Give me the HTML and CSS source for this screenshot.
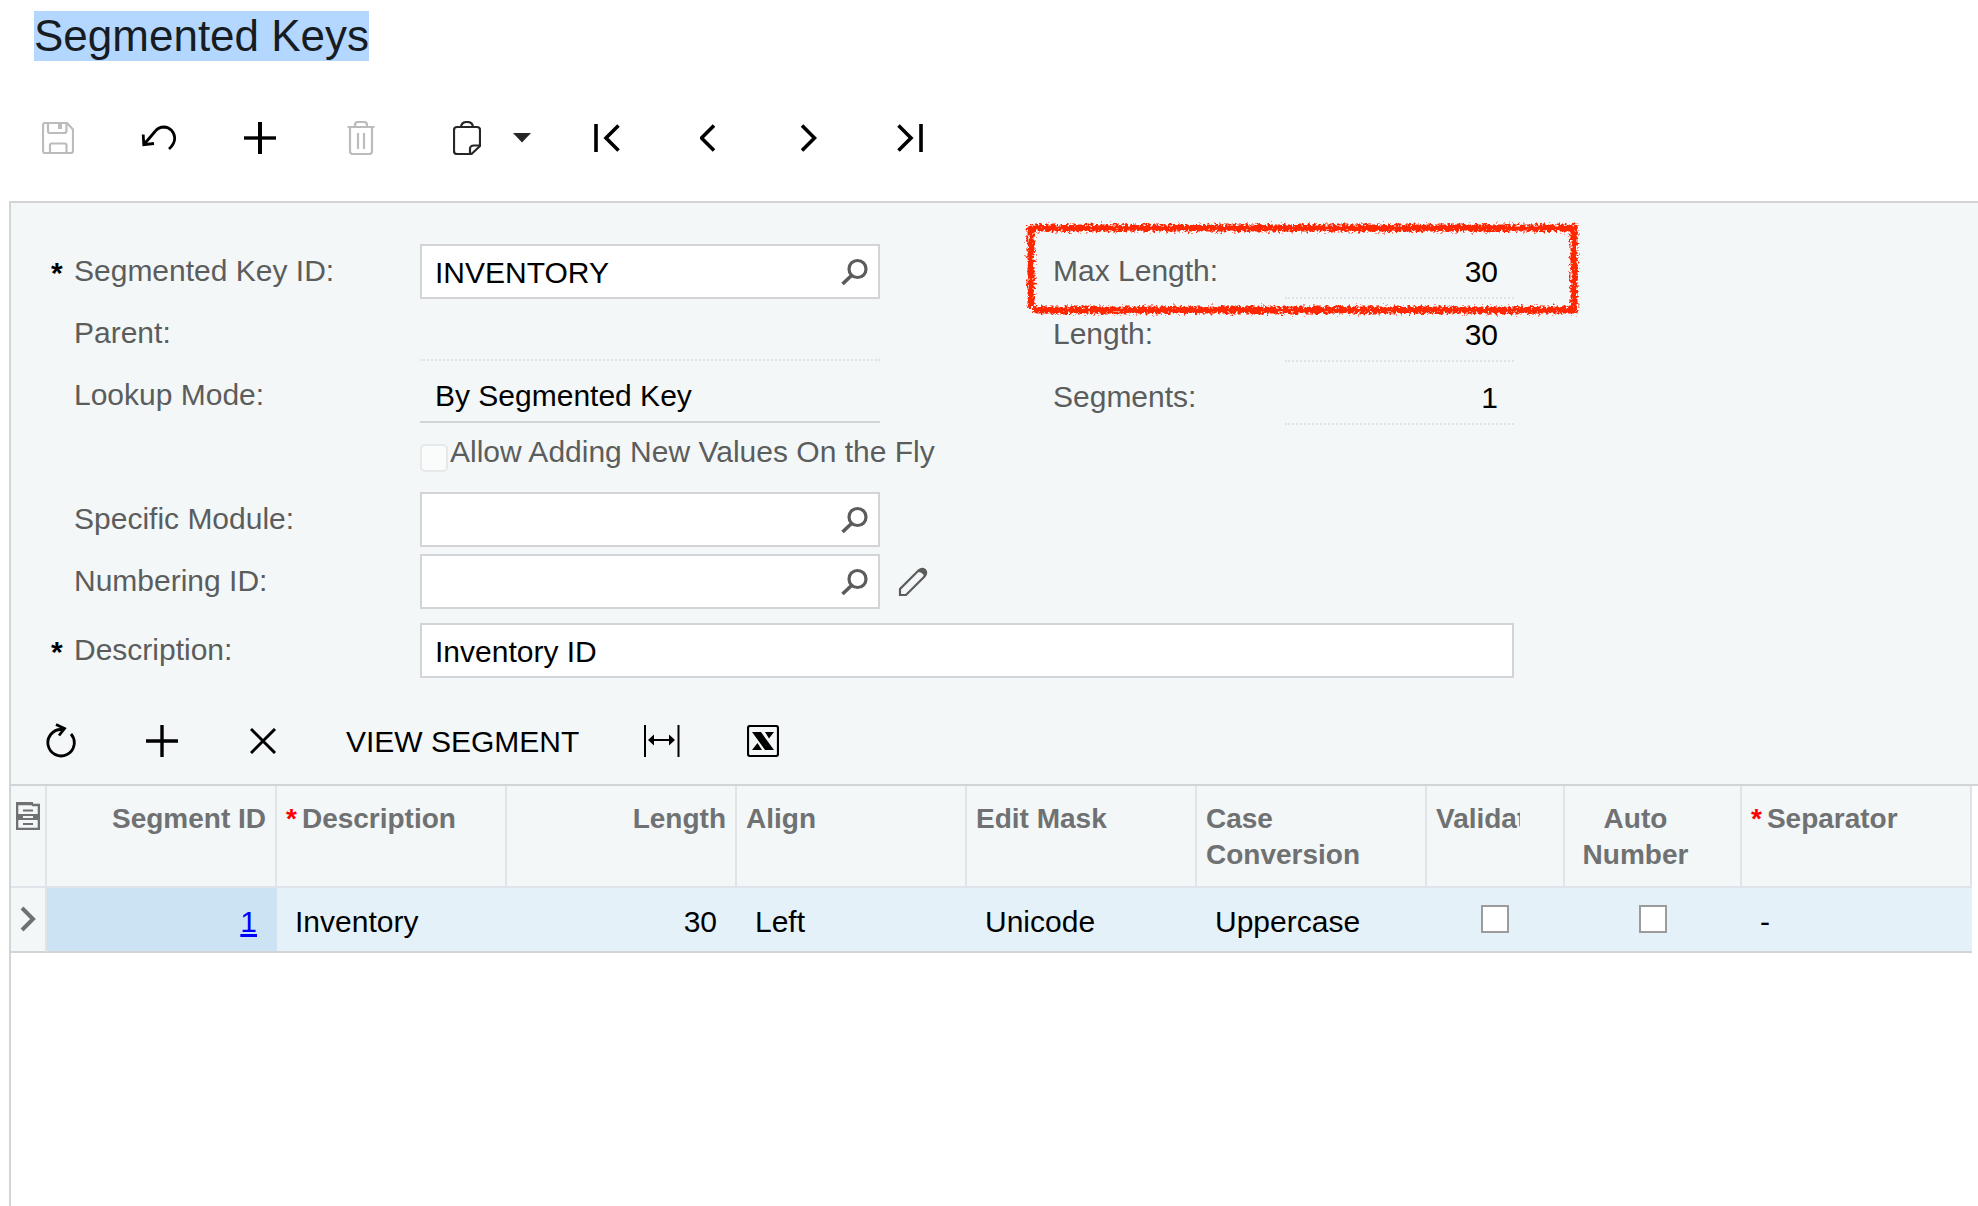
FILE: index.html
```html
<!DOCTYPE html>
<html lang="en">
<head>
  <meta charset="UTF-8">
  <meta name="viewport" content="width=device-width, initial-scale=1.0">
  <title>Segmented Keys</title>
  <link rel="stylesheet" href="styles.css">
</head>
<body>
  <!-- Shared icons -->
  <svg class="sprite" aria-hidden="true">
    <symbol id="icon-search" viewBox="0 0 28 28">
      <circle cx="17.5" cy="11" r="8.5" fill="none" stroke="currentColor" stroke-width="3.2"/>
      <path d="M11.5 17.5 L2.5 26" fill="none" stroke="currentColor" stroke-width="3.6"/>
    </symbol>
  </svg>

  <header class="page-header">
    <h1><span class="selected">Segmented Keys</span></h1>
  </header>

  <!-- Record toolbar -->
  <div class="toolbar record-toolbar">
    <button type="button" class="tool" aria-label="Save" disabled>
      <svg width="32" height="32" viewBox="0 0 32 32" fill="none" stroke="currentColor" stroke-width="2.2">
        <path d="M3 1 H25 L31 7.5 V29 Q31 31 29 31 H3 Q1 31 1 29 V3 Q1 1 3 1 Z"/>
        <path d="M6 1 V9 Q6 11 8 11 H22 Q24.5 11 24.5 9 V1"/>
        <path d="M8 31 V23 Q8 21.5 9.5 21.5 H23 Q24.5 21.5 24.5 23 V31"/>
        <path d="M18 2 V7" stroke-width="4"/>
      </svg>
    </button>
    <button type="button" class="tool" aria-label="Undo">
      <svg width="36" height="32" viewBox="0 0 36 32" fill="none" stroke="currentColor" stroke-width="2.8">
        <path d="M2.5 23 L14 9.5 Q17.5 5 23 5 A11 11.5 0 0 1 33.7 16 Q33.7 22 28 27"/>
        <path d="M2.2 12.5 L2.8 22.7 L13 21.5"/>
      </svg>
    </button>
    <button type="button" class="tool" aria-label="Add new record">
      <svg width="32" height="32" viewBox="0 0 32 32" stroke="currentColor" stroke-width="4">
        <path d="M16 0 V32" /><path d="M0 16 H32" stroke-width="3.4"/>
      </svg>
    </button>
    <button type="button" class="tool" aria-label="Delete" disabled>
      <svg width="28" height="34" viewBox="0 0 28 34" fill="none" stroke="currentColor" stroke-width="2.2">
        <path d="M0.5 6 H27.5 M8 6 V4 Q8 1 11 1 H17 Q20 1 20 4 V6"/>
        <path d="M3 6 V30 Q3 33 6 33 H22 Q25 33 25 30 V6"/>
        <path d="M11 12 V28 M17 12 V28"/>
      </svg>
    </button>
    <div class="clipboard-tools">
      <button type="button" class="tool-clip" aria-label="Clipboard">
        <svg width="28" height="34" viewBox="0 0 28 34" fill="none" stroke="currentColor" stroke-width="2.2">
          <path d="M4 6 H24 Q27 6 27 9 V25 L18.5 33 H4 Q1 33 1 30 V9 Q1 6 4 6 Z"/>
          <path d="M8 6 Q8.5 1 14 1 Q19.5 1 20 6"/>
          <path d="M27 24.5 H21 Q17 24.5 17 28 V33"/>
        </svg>
      </button>
      <button type="button" class="tool-caret" aria-label="Clipboard menu">
        <svg width="18" height="10" viewBox="0 0 18 10"><path d="M0 0 H18 L9 9.5 Z" fill="currentColor"/></svg>
      </button>
    </div>
    <button type="button" class="tool" aria-label="First">
      <svg width="26" height="28" viewBox="0 0 26 28" fill="none" stroke="currentColor" stroke-width="3.6">
        <path d="M2 0 V28 M24.5 1.5 L12 14 L24.5 26.5"/>
      </svg>
    </button>
    <button type="button" class="tool" aria-label="Previous">
      <svg width="16" height="28" viewBox="0 0 16 28" fill="none" stroke="currentColor" stroke-width="3.6">
        <path d="M14 1.5 L1.5 14 L14 26.5"/>
      </svg>
    </button>
    <button type="button" class="tool" aria-label="Next">
      <svg width="16" height="28" viewBox="0 0 16 28" fill="none" stroke="currentColor" stroke-width="3.6">
        <path d="M1 1.5 L13.5 14 L1 26.5"/>
      </svg>
    </button>
    <button type="button" class="tool" aria-label="Last">
      <svg width="26" height="28" viewBox="0 0 26 28" fill="none" stroke="currentColor" stroke-width="3.6">
        <path d="M24 0 V28 M1.5 1.5 L14 14 L1.5 26.5"/>
      </svg>
    </button>
  </div>

  <main>
    <!-- Key settings -->
    <form class="key-form">
      <div class="form-column">
        <div class="field">
          <label for="keyId"><b class="required">*</b>Segmented Key ID:</label>
          <div class="lookup">
            <input type="text" id="keyId" value="INVENTORY">
            <button type="button" aria-label="Find key"><svg width="28" height="28"><use href="#icon-search"/></svg></button>
          </div>
        </div>
        <div class="field">
          <label for="parent">Parent:</label>
          <input type="text" id="parent" class="readonly" readonly>
        </div>
        <div class="field">
          <label for="lookupMode">Lookup Mode:</label>
          <select id="lookupMode" class="readonly lookup-mode">
            <option>By Segmented Key</option>
          </select>
        </div>
        <div class="field check-field">
          <input type="checkbox" id="allowNew" disabled>
          <label for="allowNew">Allow Adding New Values On the Fly</label>
        </div>
        <div class="field">
          <label for="module">Specific Module:</label>
          <div class="lookup">
            <input type="text" id="module">
            <button type="button" aria-label="Find module"><svg width="28" height="28"><use href="#icon-search"/></svg></button>
          </div>
        </div>
        <div class="field">
          <label for="numbering">Numbering ID:</label>
          <div class="lookup">
            <input type="text" id="numbering">
            <button type="button" aria-label="Find numbering"><svg width="28" height="28"><use href="#icon-search"/></svg></button>
          </div>
          <button type="button" class="edit" aria-label="Edit numbering">
            <svg width="30" height="30" viewBox="0 0 30 30">
              <path d="M2 28 V22 L20.5 3.5 Q24 0.5 27 3 Q29.5 6 26.5 9.5 L8 28 Z" fill="none" stroke="currentColor" stroke-width="2.2"/>
              <path d="M19 5 Q24 0 27.5 2.5 Q30 6 26 10 Q25.5 5 19 5 Z" fill="currentColor"/>
            </svg>
          </button>
        </div>
      </div>

      <div class="form-column totals">
        <div class="field">
          <label for="maxLength">Max Length:</label>
          <input type="text" id="maxLength" class="readonly number" value="30" readonly>
          <!-- Hand-drawn marker around the limit -->
          <svg class="marker" width="564" height="102" viewBox="0 0 564 102" aria-hidden="true">
            <filter id="crayon" x="0" y="0" width="564" height="102" filterUnits="userSpaceOnUse">
              <feTurbulence type="fractalNoise" baseFrequency="0.4" numOctaves="2" seed="4"/>
              <feDisplacementMap in="SourceGraphic" scale="9" xChannelSelector="R" yChannelSelector="G"/>
            </filter>
            <path d="M10 10 H553 V92 H12 M10 7 V90" fill="none" stroke="#ff2600" stroke-width="7" filter="url(#crayon)"/>
          </svg>
        </div>
        <div class="field">
          <label for="length">Length:</label>
          <input type="text" id="length" class="readonly number" value="30" readonly>
        </div>
        <div class="field">
          <label for="segments">Segments:</label>
          <input type="text" id="segments" class="readonly number" value="1" readonly>
        </div>
      </div>

      <div class="field description">
        <label for="description"><b class="required">*</b>Description:</label>
        <input type="text" id="description" value="Inventory ID">
      </div>
    </form>

    <!-- Segments grid -->
    <div class="toolbar grid-toolbar">
      <button type="button" class="tool" aria-label="Refresh">
        <svg width="32" height="36" viewBox="0 0 32 36" fill="none" stroke="currentColor" stroke-width="2.8">
          <path d="M25 11 A13.2 13.2 0 1 1 15.5 6.5 L18 5.5"/>
          <path d="M10 1.5 L18.5 5.5 L13 12.5"/>
        </svg>
      </button>
      <button type="button" class="tool" aria-label="Add row">
        <svg width="34" height="32" viewBox="0 0 34 32" stroke="currentColor" stroke-width="3.4">
          <path d="M16 0 V32 M0 16 H32"/>
        </svg>
      </button>
      <button type="button" class="tool" aria-label="Delete row">
        <svg width="28" height="26" viewBox="0 0 28 26" stroke="currentColor" stroke-width="3">
          <path d="M1 1 L25 25 M25 1 L1 25"/>
        </svg>
      </button>
      <button type="button" class="tool-text">VIEW SEGMENT</button>
      <button type="button" class="tool" aria-label="Fit to screen">
        <svg width="36" height="32" viewBox="0 0 36 32" stroke="currentColor" stroke-width="2">
          <path d="M1 0 V32 M34.5 0 V32 M6 15 H30"/>
          <path d="M4 15 L10 9.5 V20.5 Z M31 15 L25 9.5 V20.5 Z" fill="currentColor" stroke="none"/>
        </svg>
      </button>
      <button type="button" class="tool" aria-label="Export to Excel">
        <svg width="32" height="32" viewBox="0 0 32 32">
          <rect x="1" y="1" width="30" height="30" rx="2" fill="none" stroke="currentColor" stroke-width="2.2"/>
          <path d="M5 7 H14 L27 25 H18 Z M18 7 H27 L22 13.5 Z M5 25 L10.5 18 L15 25 Z" fill="currentColor"/>
        </svg>
      </button>
    </div>

    <div class="grid">
      <table>
        <colgroup>
          <col class="col-marker">
          <col class="col-text" span="6">
          <col class="col-validate">
          <col class="col-auto">
          <col>
        </colgroup>
        <thead>
          <tr>
            <th class="marker-cell">
              <svg width="24" height="28" viewBox="0 0 24 28" fill="none" stroke="currentColor" stroke-width="2.6">
                <path d="M1 2 H16 L17 3 H23 V27 H1 Z"/>
                <path d="M0 1.5 H17" stroke-width="3"/>
                <path d="M1 15 H23" stroke-width="6"/>
                <path d="M7 8.5 H17 M7 22 H17" stroke-width="2"/>
                <path d="M7 15 H17" stroke="#f3f7f8" stroke-width="2"/>
              </svg>
            </th>
            <th class="right">Segment ID</th>
            <th><span class="required-red">*</span>Description</th>
            <th class="right">Length</th>
            <th>Align</th>
            <th>Edit Mask</th>
            <th>Case Conversion</th>
            <th class="check-head"><div class="clipped">Validate</div></th>
            <th class="check-head">Auto Number</th>
            <th><span class="required-red">*</span>Separator</th>
          </tr>
        </thead>
        <tbody>
          <tr>
            <td class="marker-cell">
              <svg width="16" height="28" viewBox="0 0 16 28" fill="none" stroke="currentColor" stroke-width="4">
                <path d="M2 2 L13 13 L2 24"/>
              </svg>
            </td>
            <td class="right active"><a href="#">1</a></td>
            <td>Inventory</td>
            <td class="right">30</td>
            <td>Left</td>
            <td>Unicode</td>
            <td>Uppercase</td>
            <td class="check-cell"><input type="checkbox" aria-label="Validate"></td>
            <td class="check-cell"><input type="checkbox" aria-label="Auto Number"></td>
            <td>-</td>
          </tr>
        </tbody>
      </table>
    </div>
  </main>
</body>
</html>
```
FILE: styles.css
```css
* {
  box-sizing: border-box;
}

body {
  margin: 0;
  min-height: 100vh;
  display: flex;
  flex-direction: column;
  background: #fff;
  color: #000;
  font-family: "Liberation Sans", Arial, sans-serif;
  font-size: 30px;
}

svg {
  display: block;
}

.sprite {
  position: absolute;
  width: 0;
  height: 0;
}

button, input, select {
  margin: 0;
  padding: 0;
  border: none;
  border-radius: 0;
  background: none;
  color: inherit;
  font: inherit;
}

button {
  cursor: pointer;
}

/* Title */
.page-header {
  padding: 11px 34px 14px;
}

h1 {
  margin: 0;
  font-size: 44px;
  font-weight: normal;
  line-height: 50px;
  color: #171c22;
}

.selected {
  display: inline-block;
  background: #b3d7ff;
}

/* Toolbars */
.toolbar {
  display: flex;
  align-items: center;
}

.record-toolbar {
  height: 126px;
  padding-left: 7px;
}

.grid-toolbar {
  height: 86px;
}

.tool {
  width: 101px;
  height: 60px;
  display: flex;
  align-items: center;
  justify-content: center;
}

.tool:disabled {
  color: #bcbcbc;
}

.clipboard-tools {
  display: flex;
  width: 145px;
  padding-left: 13px;
  color: #262626;
}

.tool-clip, .tool-caret {
  height: 60px;
  display: flex;
  align-items: center;
  justify-content: center;
}

.tool-clip {
  width: 86px;
}

.tool-caret {
  width: 24px;
}

.tool-text {
  height: 60px;
  padding: 2px 32px 0;
  white-space: nowrap;
}

main {
  flex: 1;
  margin-left: 9px;
  border-top: 2px solid #d2d4d8;
  border-left: 2px solid #d2d4d8;
  background: #f3f7f8;
  display: flex;
  flex-direction: column;
}

/* Form */
.key-form {
  display: grid;
  grid-template-columns: 979px 524px;
  row-gap: 14px;
  padding: 41px 0 20px;
}

.form-column {
  display: flex;
  flex-direction: column;
  gap: 7px;
}

.totals {
  gap: 8px;
}

.field {
  position: relative;
  display: flex;
  height: 55px;
}

.field label {
  position: relative;
  width: 409px;
  padding-left: 63px;
  line-height: 53px;
  color: #5b5d5d;
  white-space: nowrap;
}

.required {
  position: absolute;
  left: 40px;
  top: 2px;
  color: #000;
}

.field input[type="text"] {
  width: 460px;
  padding: 2px 13px 0;
  border: 2px solid #d2d4d8;
  background: #fff;
}

.lookup {
  position: relative;
  display: flex;
}

.lookup button {
  position: absolute;
  right: 12px;
  top: 14px;
  color: #5b5b5b;
}

.field input.readonly, .readonly {
  width: 460px;
  padding: 2px 15px 0;
  border: none;
  border-bottom: 2px dotted #dfe3e6;
  background: none;
}

.readonly.lookup-mode {
  appearance: none;
  border-bottom: 2px solid #d2d4d8;
}

.edit {
  margin-left: 18px;
  color: #5b5b5b;
}

.check-field {
  padding-left: 409px;
}

.check-field label {
  width: auto;
  padding-left: 2px;
  line-height: 43px;
}

.check-field input {
  align-self: center;
  appearance: none;
  width: 28px;
  height: 28px;
  border: 2px solid #e6e9ea;
  border-radius: 5px;
  background: #fafbfb;
}

.totals .field label {
  width: 295px;
}

.field input.number {
  width: 229px;
  padding-right: 16px;
  text-align: right;
}

.marker {
  position: absolute;
  left: 31px;
  top: -26px;
  pointer-events: none;
}

.description {
  grid-column: 1 / -1;
}

.description input[type="text"] {
  flex: 1;
}

/* Grid */
.grid {
  flex: 1;
  border-top: 2px solid #d2d4d8;
  background: #fff;
}

table {
  width: calc(100% - 6px);
  table-layout: fixed;
  border-collapse: separate;
  border-spacing: 0;
}

.col-marker {
  width: 36px;
}

.col-text {
  width: 230px;
}

.col-validate {
  width: 138px;
}

.col-auto {
  width: 177px;
}

th {
  height: 102px;
  padding: 15px 9px 13px;
  border-right: 2px solid #e0e3e8;
  border-bottom: 2px solid #e0e3e8;
  background: #f3f7f8;
  color: #6f7172;
  font-size: 28px;
  line-height: 36px;
  text-align: left;
  vertical-align: top;
}

th.check-head {
  padding-right: 43px;
  text-align: center;
}

.clipped {
  overflow: hidden;
  text-align: left;
}

.required-red {
  margin-right: 5px;
  color: #f00;
}

td {
  height: 65px;
  padding: 4px 18px 0;
  border-bottom: 2px solid #d2d4d8;
  background: #e4f1f9;
}

.right {
  text-align: right;
}

td.right {
  padding-right: 20px;
}

td.active {
  background: #cbe3f3;
}

td a {
  color: #00f;
}

.marker-cell {
  border-right: 2px solid #e0e3e8;
  background: #f3f7f8;
  color: #6f7172;
}

th.marker-cell {
  padding: 16px 0 0 5px;
}

td.marker-cell {
  padding: 0 0 0 9px;
}

td.check-cell {
  padding: 0 2px 2px 0;
  text-align: center;
}

td.check-cell input {
  display: block;
  margin: 0 auto;
  appearance: none;
  width: 28px;
  height: 28px;
  border: 2px solid #9b9b9b;
  background: #fff;
}
```
